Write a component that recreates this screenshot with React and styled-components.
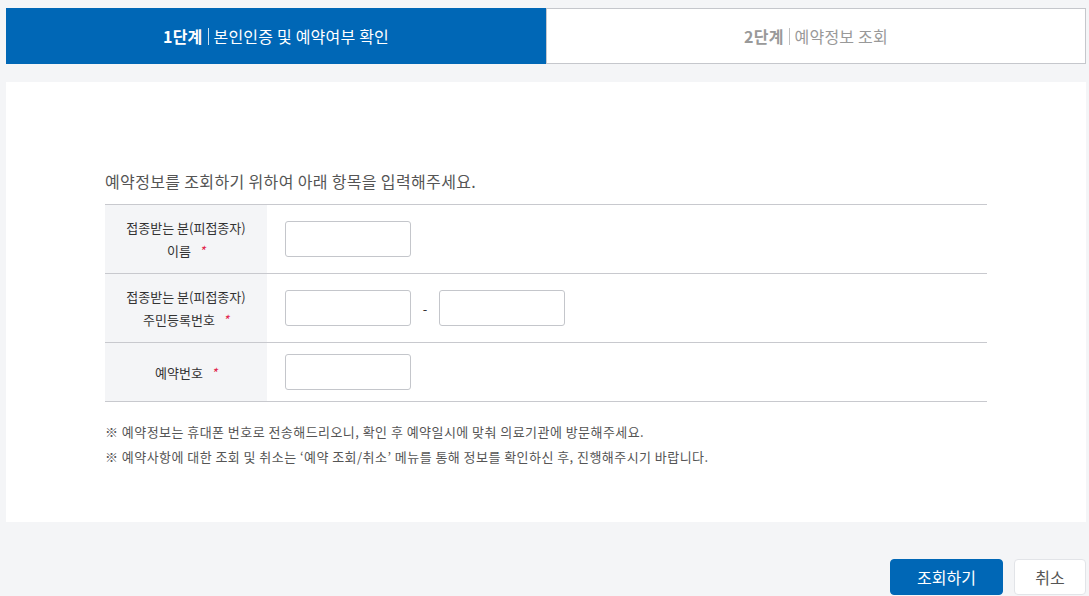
import styled, { createGlobalStyle } from "styled-components";

const GlobalStyle = createGlobalStyle`
  html, body {
    margin: 0;
    padding: 0;
    background: #f4f5f7;
    font-family: "Noto Sans CJK KR", "Noto Sans", sans-serif;
    color: #333;
  }
  * { box-sizing: border-box; }
`;

const Page = styled.div`
  padding: 8px 3px 0 6px;
`;

const Steps = styled.ul`
  display: flex;
  margin: 0;
  padding: 0;
  list-style: none;
  height: 56px;
`;

const Step = styled.li`
  flex: 1;
  display: flex;
  align-items: center;
  justify-content: center;
  font-size: 16px;
  letter-spacing: 0.2px;
  background: ${(p) => (p.$active ? "#0067b6" : "#fff")};
  color: ${(p) => (p.$active ? "#fff" : "#999")};
  border: 1px solid ${(p) => (p.$active ? "#0067b6" : "#c5c7cc")};

  b {
    font-weight: 700;
  }
`;

const Bar = styled.span`
  display: inline-block;
  width: 1px;
  height: 17px;
  margin: 0 5px;
  background: ${(p) => (p.$light ? "rgba(255,255,255,0.8)" : "#c0c0c0")};
`;

const Panel = styled.section`
  margin-top: 18px;
  background: #fff;
  height: 440px;
  padding: 88px 99px 0 99px;
`;

const Intro = styled.p`
  margin: 0 0 12px;
  font-size: 16px;
  line-height: 22px;
  color: #555;
  letter-spacing: 0.35px;
`;

const Table = styled.div`
  border-top: 1px solid #c8c9ce;
`;

const Row = styled.div`
  display: flex;
  height: ${(p) => p.$h}px;
  border-bottom: 1px solid #c8c9ce;
`;

const Label = styled.div`
  width: 162px;
  background: #f4f5f7;
  display: flex;
  align-items: center;
  justify-content: center;
  text-align: center;
  font-size: 13px;
  line-height: 23px;
  color: #333;
`;

const Req = styled.span`
  color: #e2264d;
  margin-left: 8px;
  font-style: italic;
`;

const Field = styled.div`
  display: flex;
  align-items: center;
  padding-left: 18px;
`;

const Input = styled.input`
  width: 126px;
  height: 36px;
  border: 1px solid #c4c6cb;
  border-radius: 3px;
  background: #fff;
  padding: 0 8px;
  font-size: 13px;
`;

const Dash = styled.span`
  width: 28px;
  text-align: center;
  font-size: 13px;
  color: #333;
`;

const Notes = styled.ul`
  margin: 17px 0 0;
  padding: 0;
  list-style: none;
  font-size: 13px;
  line-height: 25px;
  color: #555;
  letter-spacing: 0.45px;
`;

const Actions = styled.div`
  display: flex;
  justify-content: flex-end;
  gap: 11px;
  margin-top: 37px;
`;

const Button = styled.button`
  height: 36px;
  width: ${(p) => (p.$primary ? "113px" : "72px")};
  border-radius: 4px;
  font-family: inherit;
  font-size: 16px;
  cursor: pointer;
  background: ${(p) => (p.$primary ? "#0067b6" : "#fff")};
  color: ${(p) => (p.$primary ? "#fff" : "#555")};
  border: 1px solid ${(p) => (p.$primary ? "#0067b6" : "#e2e4e8")};
`;

export default function App() {
  return (
    <Page>
      <GlobalStyle />
      <Steps>
        <Step $active>
          <b>1단계</b>
          <Bar $light />
          본인인증 및 예약여부 확인
        </Step>
        <Step>
          <b>2단계</b>
          <Bar />
          예약정보 조회
        </Step>
      </Steps>
      <Panel>
        <Intro>예약정보를 조회하기 위하여 아래 항목을 입력해주세요.</Intro>
        <Table>
          <Row $h={69}>
            <Label>
              <div>
                접종받는 분(피접종자)
                <br />
                이름<Req>*</Req>
              </div>
            </Label>
            <Field>
              <Input type="text" />
            </Field>
          </Row>
          <Row $h={69}>
            <Label>
              <div>
                접종받는 분(피접종자)
                <br />
                주민등록번호<Req>*</Req>
              </div>
            </Label>
            <Field>
              <Input type="text" />
              <Dash>-</Dash>
              <Input type="password" />
            </Field>
          </Row>
          <Row $h={59}>
            <Label>
              <div>
                예약번호<Req>*</Req>
              </div>
            </Label>
            <Field>
              <Input type="text" />
            </Field>
          </Row>
        </Table>
        <Notes>
          <li>※ 예약정보는 휴대폰 번호로 전송해드리오니, 확인 후 예약일시에 맞춰 의료기관에 방문해주세요.</li>
          <li>※ 예약사항에 대한 조회 및 취소는 ‘예약 조회/취소’ 메뉴를 통해 정보를 확인하신 후, 진행해주시기 바랍니다.</li>
        </Notes>
      </Panel>
      <Actions>
        <Button $primary>조회하기</Button>
        <Button>취소</Button>
      </Actions>
    </Page>
  );
}
